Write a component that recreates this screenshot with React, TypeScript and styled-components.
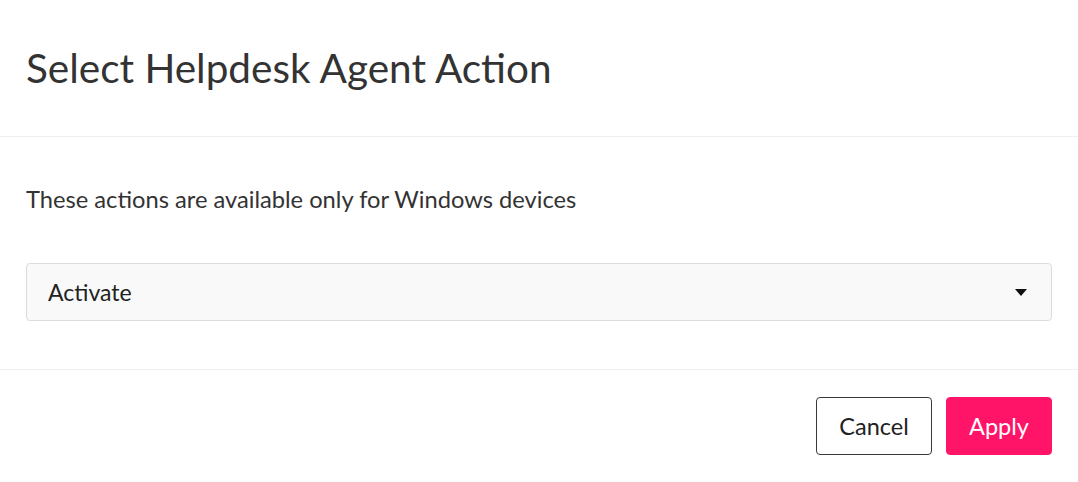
import React from "react";
import styled, { createGlobalStyle } from "styled-components";

const Global = createGlobalStyle`
  html, body { margin: 0; padding: 0; background: #fff; }
  body { font-family: Lato, "Open Sans", sans-serif; color: #333; }
  * { box-sizing: border-box; }
`;

const Dialog = styled.div`
  width: 1078px;
  height: 482px;
  display: flex;
  flex-direction: column;
  background: #fff;
`;

const Header = styled.header`
  height: 137px;
  padding: 0 26px;
  display: flex;
  align-items: center;
  border-bottom: 1px solid #efefef;
`;

const Title = styled.h1`
  margin: 0;
  font-size: 40.5px;
  font-weight: 400;
  color: #333;
  line-height: 1;
`;

const Body = styled.section`
  padding: 47px 26px 48px;
  display: flex;
  flex-direction: column;
  gap: 49px;
`;

const Note = styled.p`
  margin: 0;
  font-size: 23.7px;
  line-height: 30px;
  color: #333;
`;

const Select = styled.div`
  height: 58px;
  display: flex;
  align-items: center;
  justify-content: space-between;
  padding: 0 24px 0 21px;
  background: #f9f9f9;
  border: 1px solid #dcdcdc;
  border-radius: 4px;
  font-size: 23px;
  color: #222;
`;

const Caret = styled.span`
  width: 0;
  height: 0;
  margin-top: 1px;
  border-left: 6px solid transparent;
  border-right: 6px solid transparent;
  border-top: 7px solid #111;
`;

const Footer = styled.footer`
  flex: 1;
  border-top: 1px solid #efefef;
  padding: 27px 26px;
  display: flex;
  justify-content: flex-end;
  gap: 14px;
`;

const Button = styled.button<{ $primary?: boolean }>`
  height: 58px;
  padding: 0 22px;
  min-width: ${(p) => (p.$primary ? "106px" : "116px")};
  border-radius: 4px;
  font-family: inherit;
  font-size: 23.5px;
  cursor: pointer;
  border: 1px solid ${(p) => (p.$primary ? "#ff1467" : "#3a3a3a")};
  background: ${(p) => (p.$primary ? "#ff1467" : "#fff")};
  color: ${(p) => (p.$primary ? "#fff" : "#222")};
`;

export default function App() {
  return (
    <>
      <Global />
      <Dialog>
        <Header>
          <Title>Select Helpdesk Agent Action</Title>
        </Header>
        <Body>
          <Note>These actions are available only for Windows devices</Note>
          <Select>
            <span>Activate</span>
            <Caret />
          </Select>
        </Body>
        <Footer>
          <Button>Cancel</Button>
          <Button $primary>Apply</Button>
        </Footer>
      </Dialog>
    </>
  );
}
